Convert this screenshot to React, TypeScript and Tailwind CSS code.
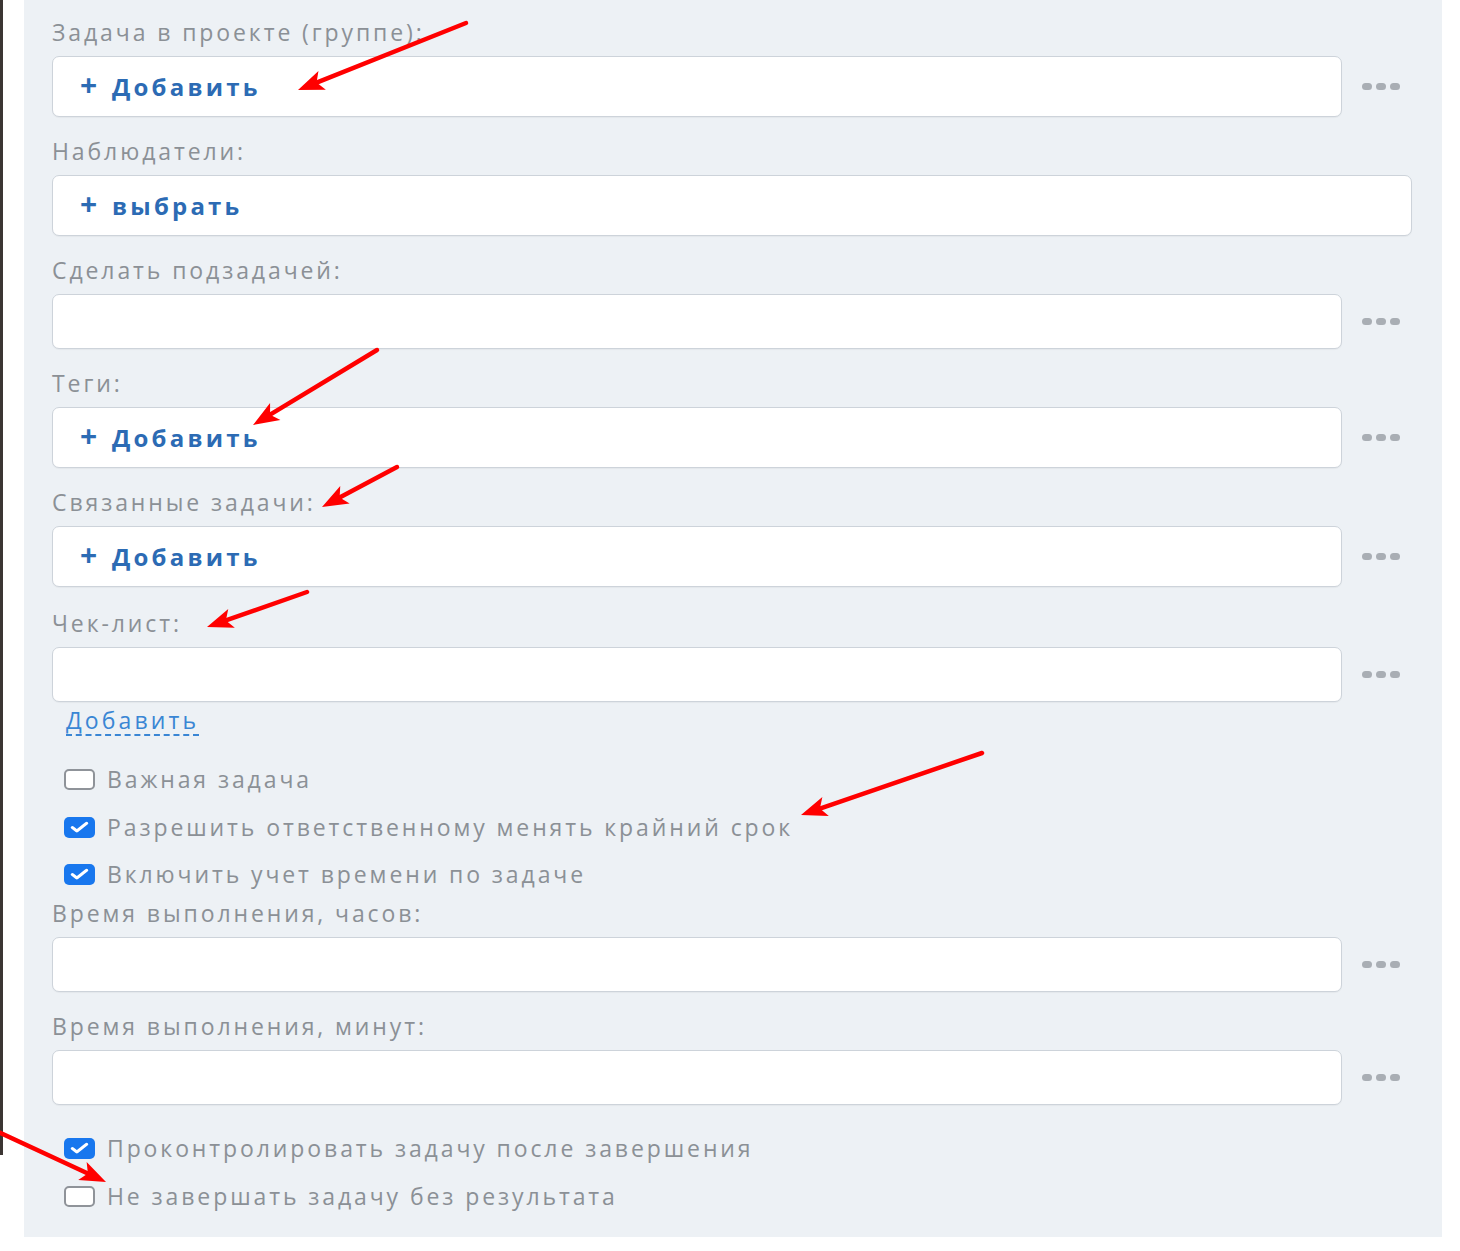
import { Check } from "lucide-react";

const font = { fontFamily: '"Open Sans", "Liberation Sans", sans-serif' };

const arrows: [number, number, number, number][] = [
  [466, 23, 298, 90],
  [377, 350, 253, 425],
  [397, 467, 322, 507],
  [307, 592, 207, 627],
  [982, 753, 801, 815],
  [-10, 1128, 106, 1182],
];

function Arrow({ x1, y1, x2, y2 }: { x1: number; y1: number; x2: number; y2: number }) {
  const dx = x2 - x1;
  const dy = y2 - y1;
  const len = Math.hypot(dx, dy);
  const ux = dx / len;
  const uy = dy / len;
  const hl = 26;
  const hw = 10;
  const bx = x2 - ux * hl;
  const by = y2 - uy * hl;
  const px = -uy;
  const py = ux;
  const nx = bx + ux * 6;
  const ny = by + uy * 6;
  const pts = `${x2},${y2} ${bx + px * hw},${by + py * hw} ${nx},${ny} ${bx - px * hw},${by - py * hw}`;
  return (
    <g>
      <line x1={x1} y1={y1} x2={nx} y2={ny} stroke="#ff0000" strokeWidth={4.5} strokeLinecap="round" />
      <polygon points={pts} fill="#ff0000" />
    </g>
  );
}

function Dots() {
  return (
    <div className="w-[70px] flex items-center justify-end gap-[4px] pr-[12px]">
      <span className="w-[10px] h-[7px] rounded-full bg-[#a9aeb4]" />
      <span className="w-[10px] h-[7px] rounded-full bg-[#a9aeb4]" />
      <span className="w-[10px] h-[7px] rounded-full bg-[#a9aeb4]" />
    </div>
  );
}

function Label({ text, className = "" }: { text: string; className?: string }) {
  return (
    <div
      className={`h-[28px] leading-[28px] text-[23px] font-medium tracking-[2.9px] text-[#8b9096] whitespace-nowrap ${className}`}
    >
      {text}
    </div>
  );
}

function Field({
  label,
  action,
  h = "h-[61px]",
  dots = true,
  className = "",
}: {
  label: string;
  action?: string;
  h?: string;
  dots?: boolean;
  className?: string;
}) {
  return (
    <div className={className}>
      <Label text={label} />
      <div className="flex mt-[10px]">
        <div
          className={`flex-1 ${h} bg-white border border-[#cdd3da] rounded-[7px] flex items-center pl-[27px] shadow-[0_1px_1px_rgba(0,0,0,0.04)]`}
        >
          {action && (
            <span className="flex items-center text-[#2c6bb4] font-bold">
              <span className="text-[30px] leading-none w-[17px] flex justify-center -mt-[3px]">+</span>
              <span className="ml-[15px] text-[24px] tracking-[3.2px] leading-none">{action}</span>
            </span>
          )}
        </div>
        {dots && <Dots />}
      </div>
    </div>
  );
}

function Checkbox({ label, checked, className = "" }: { label: string; checked?: boolean; className?: string }) {
  return (
    <div className={`flex items-center h-[28px] pl-[12px] ${className}`}>
      {checked ? (
        <span className="w-[31px] h-[21px] rounded-[5px] bg-[#1877ee] flex items-center justify-center">
          <Check size={17} strokeWidth={3.8} className="text-white scale-x-125" />
        </span>
      ) : (
        <span className="w-[31px] h-[21px] rounded-[5px] bg-white border-2 border-[#8f9399]" />
      )}
      <span className="ml-[12px] text-[23px] font-medium tracking-[2.9px] text-[#8b9096] leading-[28px] whitespace-nowrap">
        {label}
      </span>
    </div>
  );
}

export default function App() {
  return (
    <div className="relative w-[1460px] h-[1251px] bg-white overflow-hidden flex" style={font}>
      <div className="w-[3px] h-[1155px] bg-[#3b3533]" />
      <div className="w-[21px]" />
      <div className="w-[1418px] h-[1237px] bg-[#edf1f5] pl-[28px] pr-[30px] pt-[18px] flex flex-col">
        <Field label="Задача в проекте (группе):" action="Добавить" />
        <Field label="Наблюдатели:" action="выбрать" dots={false} className="mt-[20px]" />
        <Field label="Сделать подзадачей:" h="h-[55px]" className="mt-[20px]" />
        <Field label="Теги:" action="Добавить" className="mt-[20px]" />
        <Field label="Связанные задачи:" action="Добавить" className="mt-[20px]" />
        <Field label="Чек-лист:" h="h-[55px]" className="mt-[22px]" />
        <div className="mt-[4px] pl-[14px] h-[30px]">
          <span className="inline-block leading-[28px] text-[23px] tracking-[3.1px] text-[#3a86d4] border-b-2 border-dashed border-[#3a86d4] whitespace-nowrap">
            Добавить
          </span>
        </div>
        <Checkbox label="Важная задача" className="mt-[29px]" />
        <Checkbox label="Разрешить ответственному менять крайний срок" checked className="mt-[20px]" />
        <Checkbox label="Включить учет времени по задаче" checked className="mt-[19px]" />
        <Field label="Время выполнения, часов:" h="h-[55px]" className="mt-[11px]" />
        <Field label="Время выполнения, минут:" h="h-[55px]" className="mt-[20px]" />
        <Checkbox label="Проконтролировать задачу после завершения" checked className="mt-[29px]" />
        <Checkbox label="Не завершать задачу без результата" className="mt-[20px]" />
      </div>
      <svg className="absolute inset-0 pointer-events-none" width={1460} height={1251}>
        {arrows.map(([x1, y1, x2, y2], i) => (
          <Arrow key={i} x1={x1} y1={y1} x2={x2} y2={y2} />
        ))}
      </svg>
    </div>
  );
}
